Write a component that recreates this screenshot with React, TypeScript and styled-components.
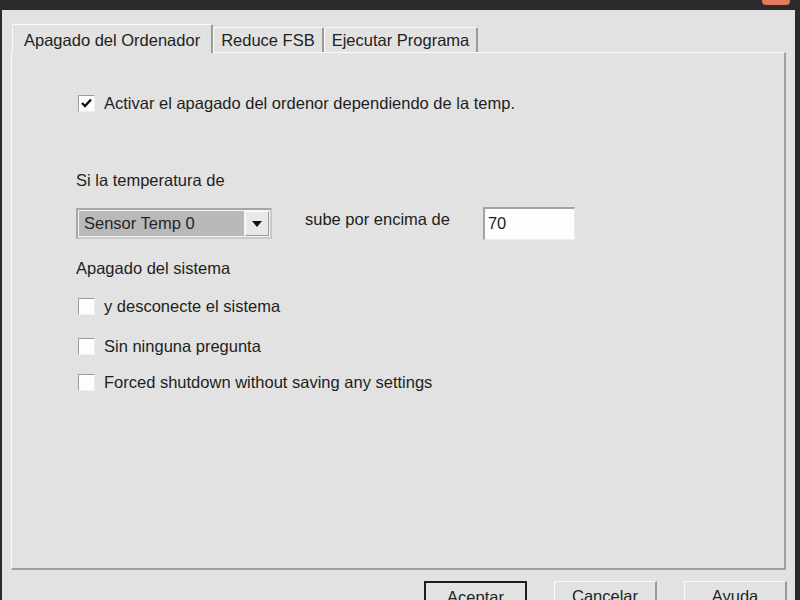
import styled, { createGlobalStyle } from 'styled-components';

const GlobalStyle = createGlobalStyle`
  html, body {
    margin: 0;
    padding: 0;
    background: #2a2a2a;
  }
`;

const Window = styled.div`
  width: 800px;
  height: 600px;
  display: flex;
  flex-direction: column;
  background: #2a2a2a;
  overflow: hidden;
  font-family: 'Liberation Sans', Arial, sans-serif;
  font-size: 16.5px;
  color: #1e1e1e;
`;

const TitleBar = styled.div`
  height: 10px;
  flex: none;
  display: flex;
  justify-content: flex-end;
  padding-right: 10px;
`;

const CloseButton = styled.div`
  width: 28px;
  height: 5px;
  background: #e27a62;
  border-radius: 0 0 4px 4px;
`;

const Client = styled.div`
  flex: 1;
  margin: 0 5px 0 2px;
  background: #e2e2e2;
  padding: 14px 8px 0 9px;
  display: flex;
  flex-direction: column;
`;

const TabStrip = styled.div`
  display: flex;
  align-items: flex-end;
  height: 28px;
  padding-left: 1px;
  position: relative;
  z-index: 1;
`;

const Tab = styled.div<{ $active?: boolean }>`
  height: ${(p) => (p.$active ? 29 : 25)}px;
  padding: ${(p) => (p.$active ? '0 11px' : '0 7px')};
  display: flex;
  align-items: center;
  box-sizing: border-box;
  background: #e2e2e2;
  border-top: 1px solid #fafafa;
  border-left: 1px solid #fafafa;
  border-right: 2px solid #9a9a9a;
  border-radius: 2px 2px 0 0;
  margin-bottom: ${(p) => (p.$active ? -1 : 0)}px;
  white-space: nowrap;
  color: #222;
  padding-top: ${(p) => (p.$active ? 2 : 1)}px;
`;

const Panel = styled.div`
  height: 518px;
  box-sizing: border-box;
  border-top: 1px solid #fafafa;
  border-left: 1px solid #fafafa;
  border-right: 2px solid #a0a0a0;
  border-bottom: 2px solid #a0a0a0;
  margin-right: 1px;
  padding: 40px 0 0 64px;
  display: flex;
  flex-direction: column;
`;

const CheckRow = styled.label<{ $top: number }>`
  display: flex;
  align-items: center;
  gap: 9px;
  margin-top: ${(p) => p.$top}px;
  padding-left: 2px;
  height: 20px;
`;

const Box = styled.span`
  width: 15px;
  height: 15px;
  flex: none;
  background: #fdfdfd;
  border-top: 1px solid #9c9c9c;
  border-left: 1px solid #9c9c9c;
  border-right: 1px solid #efefef;
  border-bottom: 1px solid #efefef;
  display: flex;
  align-items: center;
  justify-content: center;
`;

const Label = styled.div<{ $top: number }>`
  margin-top: ${(p) => p.$top}px;
  height: 20px;
  line-height: 20px;
`;

const SensorRow = styled.div`
  display: flex;
  align-items: center;
  margin-top: 17px;
`;

const Combo = styled.div`
  width: 196px;
  height: 31px;
  box-sizing: border-box;
  border: 2px solid #c9c9c9;
  border-top-color: #a6a6a6;
  border-left-color: #a6a6a6;
  background: #f4f4f4;
  display: flex;
  padding: 1px;
`;

const ComboValue = styled.div`
  flex: 1;
  background: #b9b9b9;
  display: flex;
  align-items: center;
  padding-left: 5px;
  color: #252525;
`;

const ComboArrow = styled.div`
  width: 24px;
  margin-left: 1px;
  background: #e8e8e8;
  border-right: 1px solid #9c9c9c;
  border-bottom: 1px solid #9c9c9c;
  border-top: 1px solid #fafafa;
  border-left: 1px solid #fafafa;
  box-sizing: border-box;
  display: flex;
  align-items: center;
  justify-content: center;
`;

const MidText = styled.div`
  margin-left: 33px;
  margin-top: -9px;
`;

const TextInput = styled.div`
  margin-left: 33px;
  width: 92px;
  height: 33px;
  box-sizing: border-box;
  background: #fdfdfd;
  border-top: 2px solid #a4a4a4;
  border-left: 2px solid #a4a4a4;
  border-right: 1px solid #ededed;
  border-bottom: 1px solid #ededed;
  padding: 5px 0 0 3px;
`;

const ButtonRow = styled.div`
  display: flex;
  justify-content: flex-end;
  gap: 27px;
  margin-top: 11px;
  margin-right: 0;
`;

const Button = styled.div<{ $default?: boolean }>`
  width: 103px;
  height: 32px;
  box-sizing: border-box;
  display: flex;
  justify-content: center;
  padding-top: 5px;
  background: #e2e2e2;
  border: ${(p) => (p.$default ? '2px solid #1c1c1c' : '1px solid #fafafa')};
  border-right: 2px solid ${(p) => (p.$default ? '#1c1c1c' : '#9a9a9a')};
  color: #222;
`;

const Check = () => (
  <svg width="13" height="13" viewBox="0 0 13 13">
    <path d="M2 6 L5 9 L11 2.5" fill="none" stroke="#111" strokeWidth="2.4" />
  </svg>
);

const Arrow = () => (
  <svg width="10" height="6" viewBox="0 0 10 6">
    <path d="M0 0 H10 L5 6 Z" fill="#111" />
  </svg>
);

const App = () => {
  return (
    <Window>
      <GlobalStyle />
      <TitleBar>
        <CloseButton />
      </TitleBar>
      <Client>
        <TabStrip>
          <Tab $active>Apagado del Ordenador</Tab>
          <Tab>Reduce FSB</Tab>
          <Tab>Ejecutar Programa</Tab>
        </TabStrip>
        <Panel>
          <CheckRow $top={0}>
            <Box>
              <Check />
            </Box>
            Activar el apagado del ordenor dependiendo de la temp.
          </CheckRow>
          <Label $top={57}>Si la temperatura de</Label>
          <SensorRow>
            <Combo>
              <ComboValue>Sensor Temp 0</ComboValue>
              <ComboArrow>
                <Arrow />
              </ComboArrow>
            </Combo>
            <MidText>sube por encima de</MidText>
            <TextInput>70</TextInput>
          </SensorRow>
          <Label $top={18}>Apagado del sistema</Label>
          <CheckRow $top={18}>
            <Box />
            y desconecte el sistema
          </CheckRow>
          <CheckRow $top={20}>
            <Box />
            Sin ninguna pregunta
          </CheckRow>
          <CheckRow $top={16}>
            <Box />
            Forced shutdown without saving any settings
          </CheckRow>
        </Panel>
        <ButtonRow>
          <Button $default>Aceptar</Button>
          <Button>Cancelar</Button>
          <Button>Ayuda</Button>
        </ButtonRow>
      </Client>
    </Window>
  );
};

export default App;
